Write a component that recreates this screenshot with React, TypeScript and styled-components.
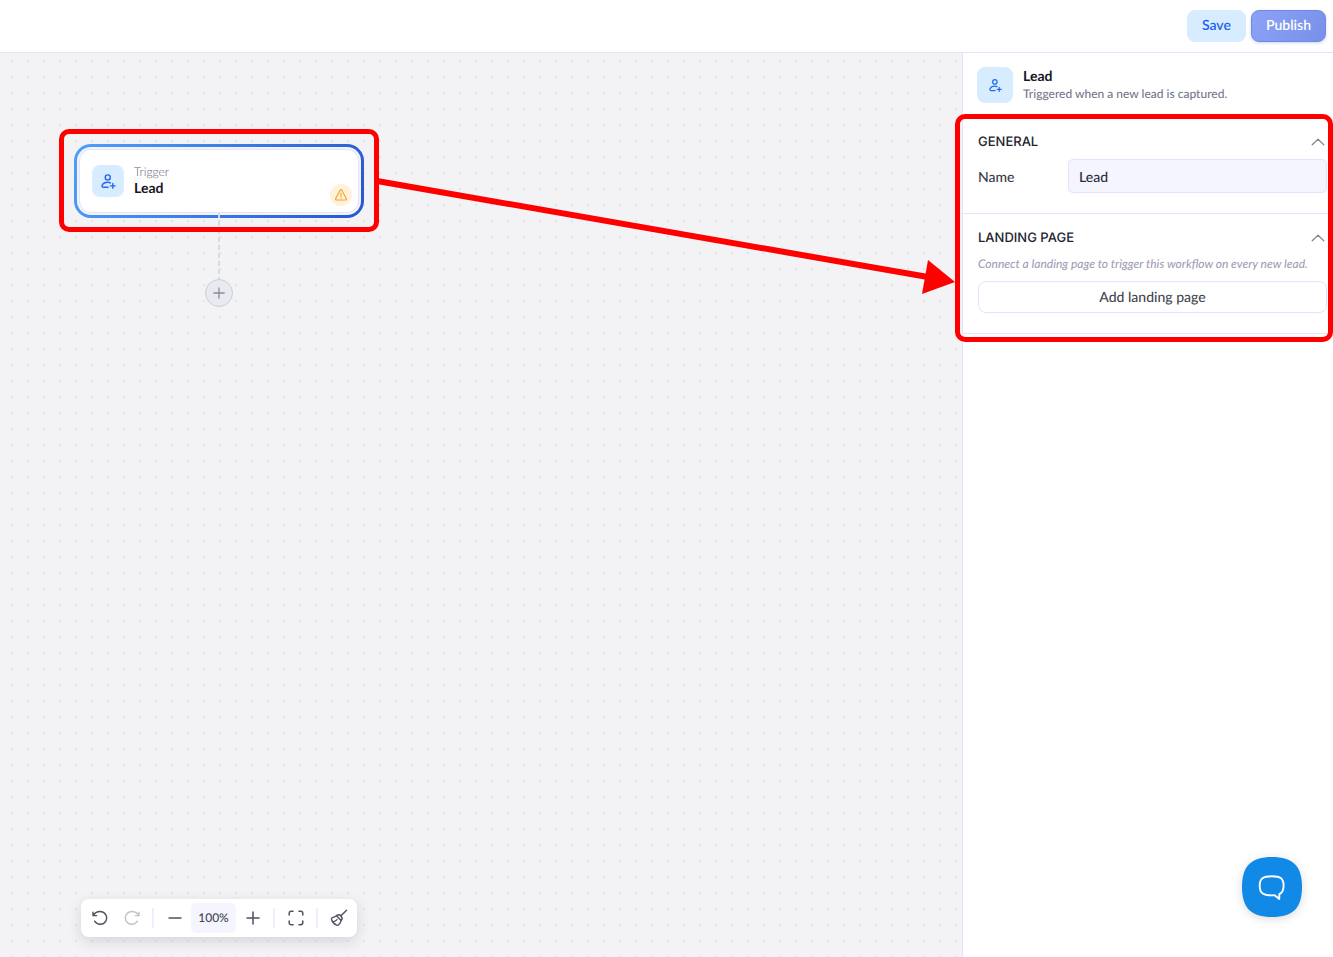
import React from "react";
import styled, { createGlobalStyle } from "styled-components";

const GlobalStyle = createGlobalStyle`
  *, *::before, *::after { box-sizing: border-box; }
  body {
    margin: 0;
    background: #fff;
    color: #23232f;
    font-family: Lato, "Open Sans", sans-serif;
    font-size: 14px;
    text-rendering: geometricPrecision;
  }
  button, input { font: inherit; color: inherit; text-rendering: inherit; }
  button { cursor: pointer; }
  h1, h2, p { margin: 0; }
`;

const line = "#e4e2fd";
const red = "#ff0000";

const Page = styled.div`
  position: relative;
  display: flex;
  flex-direction: column;
  min-height: 100vh;
`;

const TopBar = styled.header`
  display: flex;
  justify-content: flex-end;
  gap: 5px;
  padding: 10px 7px;
  border-bottom: 1px solid ${line};
`;

const ActionButton = styled.button<{ $primary?: boolean }>`
  height: 32px;
  padding: 0 14px 3px;
  border: 1px solid ${(p) => (p.$primary ? "#7389df" : "#d8ecff")};
  border-radius: 8px;
  background: ${(p) =>
    p.$primary ? "linear-gradient(120deg, #8ba2f6, #7890ea)" : "#d8ecff"};
  color: ${(p) => (p.$primary ? "#fff" : "#1a63f0")};
  box-shadow: ${(p) => (p.$primary ? "0 1px 3px rgba(90, 110, 220, 0.3)" : "none")};
  font-weight: 600;
`;

const Workspace = styled.div`
  display: flex;
  flex: 1;
`;

const Canvas = styled.main`
  position: relative;
  flex: 1;
  min-width: 0;
  background-color: #f3f3f5;
  background-image: conic-gradient(from 90deg at 14px 14px, #e4e4e7 25%, transparent 0);
  background-position: -3px -7px;
  background-size: 16px 16px;
`;

const NodeRing = styled.div`
  position: absolute;
  left: 74px;
  top: 91px;
  width: 290px;
  padding: 2px;
  border: 3px solid transparent;
  border-radius: 17px;
  background:
    linear-gradient(#f3f3f8, #f3f3f8) padding-box,
    linear-gradient(120deg, #4ea0fb, #2557d2) border-box;
`;

const NodeCard = styled.article`
  position: relative;
  display: flex;
  align-items: center;
  gap: 10px;
  height: 64px;
  padding: 0 12px;
  border: 1px solid ${line};
  border-radius: 12px;
  background: #fff;
`;

const IconTile = styled.span<{ $size: number }>`
  display: flex;
  flex: none;
  align-items: center;
  justify-content: center;
  width: ${(p) => p.$size}px;
  height: ${(p) => p.$size}px;
  border-radius: 8px;
  background: #d8ecff;
  color: #2468f2;
`;

const Kicker = styled.p`
  color: #5c5c74;
  font-size: 12px;
  font-weight: 300;
  line-height: 14px;
`;

const Title = styled.h1`
  color: #17171f;
  font-size: 14px;
  font-weight: 700;
  line-height: 18px;
`;

const Subtitle = styled.p`
  color: #77778c;
  font-size: 12px;
  font-weight: 500;
  line-height: 18px;
`;

const WarningBadge = styled.span`
  position: absolute;
  right: 6px;
  bottom: 6px;
  display: flex;
  align-items: center;
  justify-content: center;
  width: 22px;
  height: 22px;
  border-radius: 50%;
  background: #fff1da;
  color: #f5a432;
`;

const Connector = styled.svg`
  position: absolute;
  left: 218px;
  top: 160px;
`;

const AddStep = styled.button`
  position: absolute;
  left: 205px;
  top: 226px;
  display: flex;
  align-items: center;
  justify-content: center;
  width: 28px;
  height: 28px;
  padding: 0;
  border: 1px solid #c9ced9;
  border-radius: 50%;
  background: #e9e9f0;
  color: #8a8a9e;
`;

const Toolbar = styled.div`
  position: absolute;
  left: 81px;
  bottom: 20px;
  display: flex;
  align-items: center;
  height: 38px;
  padding: 0 4px;
  border-radius: 8px;
  background: #fff;
  box-shadow: 0 4px 14px rgba(30, 30, 60, 0.14);
`;

const ToolGroup = styled.div<{ $gap: number }>`
  display: flex;
  gap: ${(p) => p.$gap}px;
`;

const ToolButton = styled.button`
  display: flex;
  align-items: center;
  justify-content: center;
  width: 29px;
  height: 30px;
  padding: 0;
  border: 0;
  background: none;
  color: #50505f;

  &:disabled { color: #c3c3ca; }
`;

const ZoomLevel = styled.button`
  width: 45px;
  height: 30px;
  padding: 0 0 2px;
  border: 0;
  border-radius: 5px;
  background: #f5f5ff;
  color: #454554;
  font-size: 12px;
  font-weight: 500;
`;

const Divider = styled.span`
  width: 2px;
  height: 20px;
  margin: 0 6px;
  background: #eeeefd;
`;

const Panel = styled.aside`
  position: relative;
  flex: none;
  width: 371px;
  border-left: 1px solid ${line};
  background: #fff;
`;

const PanelHead = styled.header`
  display: flex;
  align-items: center;
  gap: 10px;
  padding: 14px 14px 15px;
`;

const Section = styled.section`
  padding: 14px 6px 20px 15px;
  border-bottom: 1px solid ${line};
`;

const SectionHead = styled.div`
  display: flex;
  align-items: center;
  justify-content: space-between;
  height: 20px;
  margin-bottom: 7px;
`;

const SectionTitle = styled.h2`
  color: #23232f;
  font-family: Inter, sans-serif;
  font-size: 13px;
  font-weight: 500;
  line-height: 20px;
`;

const Collapse = styled.button`
  display: flex;
  padding: 0 2px;
  border: 0;
  background: none;
  color: #85858f;
`;

const Field = styled.div`
  display: flex;
  align-items: center;
`;

const FieldLabel = styled.label`
  flex: none;
  width: 90px;
  color: #3c3c49;
  font-weight: 500;
`;

const TextInput = styled.input`
  flex: 1;
  min-width: 0;
  height: 34px;
  padding: 0 10px;
  border: 1px solid ${line};
  border-radius: 5px;
  background: #f5f5ff;
  color: #2b2b37;
  font-weight: 500;
`;

const Hint = styled.p`
  margin-bottom: 8px;
  color: #a0a0b6;
  font-size: 12px;
  font-style: italic;
  font-weight: 500;
  line-height: 18px;
`;

const WideButton = styled.button`
  width: 100%;
  height: 32px;
  padding: 0 0 2px;
  border: 1px solid ${line};
  border-radius: 8px;
  background: #fff;
  color: #454550;
  font-weight: 500;
`;

const ChatButton = styled.button`
  position: fixed;
  right: 31px;
  bottom: 40px;
  display: flex;
  padding: 0;
  border: 0;
  background: none;
  filter: drop-shadow(0 2px 5px rgba(0, 0, 0, 0.14));
`;

const Highlight = styled.div`
  position: absolute;
  border: 5px solid ${red};
  border-radius: 10px;
  pointer-events: none;
`;

const NodeHighlight = styled(Highlight)`
  left: 59px;
  top: 76px;
  width: 320px;
  height: 103px;
`;

const PanelHighlight = styled(Highlight)`
  left: -8px;
  right: 0;
  top: 61px;
  height: 228px;
`;

const Arrow = styled.svg`
  position: absolute;
  left: 375px;
  top: 170px;
  pointer-events: none;
`;

const stroke = {
  fill: "none",
  stroke: "currentColor",
  strokeLinecap: "round" as const,
  strokeLinejoin: "round" as const,
};

const LeadIcon = ({ size }: { size: number }) => (
  <svg width={size} height={size} viewBox="0 0 16 16" {...stroke} strokeWidth="1.5">
    <circle cx="7.2" cy="3.6" r="2.7" />
    <path d="M7.6 14.2H2.6C1.2 14.2 .8 13.2 1.3 12C2.2 9.7 4.4 8.8 7 8.8C8.2 8.8 9.3 9 10 9.5M12.6 10.2V15.2M10.1 12.7H15.1" />
  </svg>
);

const WarningIcon = () => (
  <svg width="14" height="14" viewBox="0 0 14 14" {...stroke} strokeWidth="1.2">
    <path d="M6.2 2.2Q7 1 7.8 2.2L12.3 10.5Q12.8 12 11.4 12H2.6Q1.2 12 1.7 10.5ZM7 5V8.2M7 9.8V10.1" />
  </svg>
);

const PlusIcon = ({ size }: { size: number }) => (
  <svg width={size} height={size} viewBox="0 0 14 14" {...stroke} strokeWidth="1.5">
    <path d="M7 1V13M1 7H13" />
  </svg>
);

const MinusIcon = () => (
  <svg width="14" height="14" viewBox="0 0 14 14" {...stroke} strokeWidth="1.4">
    <path d="M1 7H13" />
  </svg>
);

const UndoIcon = ({ flipped }: { flipped?: boolean }) => (
  <svg width="16" height="16" viewBox="0 0 16 16" {...stroke} strokeWidth="1.4">
    <g transform={flipped ? "matrix(-1 0 0 1 16 0)" : undefined}>
      <path d="M1 2.2V5.6H4.6M1.3 5.3C2.8 3 5.3 1.5 8.2 1.5A6.4 6.4 0 1 1 2.7 11.2" />
    </g>
  </svg>
);

const FitIcon = () => (
  <svg width="16" height="16" viewBox="0 0 16 16" {...stroke} strokeWidth="1.5">
    <path d="M1.2 5V3.4Q1.2 1.2 3.4 1.2H5M11 1.2H12.6Q14.8 1.2 14.8 3.4V5M14.8 11V12.6Q14.8 14.8 12.6 14.8H11M5 14.8H3.4Q1.2 14.8 1.2 12.6V11" />
  </svg>
);

const BroomIcon = () => (
  <svg width="18" height="18" viewBox="0 0 18 18" {...stroke} strokeWidth="1.4">
    <path d="M16.6 1.2L10.7 7.1M6.4 6.8Q8.8 4.6 11 6.9Q13.2 9.2 11.2 11.5M6.4 6.8L11.2 11.5M6.4 6.8Q4.6 8.2 2.4 8.6Q1.2 9 1.5 10.4Q2.6 14.4 6.6 16.2Q8 16.7 9 15.4Q10.6 13.6 11.2 11.5M3.4 12.6Q5.4 12.4 7 10.6" />
  </svg>
);

const ChevronUp = () => (
  <svg width="14" height="8" viewBox="0 0 14 8" {...stroke} strokeWidth="1.2">
    <path d="M1.2 6.8L7 1.2L12.8 6.8" />
  </svg>
);

const ChatIcon = () => (
  <svg width="60" height="60" viewBox="0 0 60 60" fill="none">
    <path
      d="M30 0C51 0 60 9 60 30C60 51 51 60 30 60C9 60 0 51 0 30C0 9 9 0 30 0Z"
      fill="#1189e7"
    />
    <path
      d="M30 19.2C38.5 19.2 41.6 21.5 41.6 28.5C41.6 33 40.4 35.8 37.3 37.2L37.3 42L32.6 38.3C31.8 38.4 30.8 38.4 29.8 38.4C21 38.4 17.7 36 17.7 28.7C17.7 21.5 21 19.2 30 19.2Z"
      stroke="#fff"
      strokeWidth="1.9"
      strokeLinejoin="round"
    />
  </svg>
);

const PanelSection = ({ title, children }: { title: string; children: React.ReactNode }) => (
  <Section>
    <SectionHead>
      <SectionTitle>{title}</SectionTitle>
      <Collapse type="button" aria-label="Collapse section">
        <ChevronUp />
      </Collapse>
    </SectionHead>
    {children}
  </Section>
);

export default function App() {
  return (
    <Page>
      <GlobalStyle />
      <TopBar>
        <ActionButton type="button">Save</ActionButton>
        <ActionButton type="button" $primary>
          Publish
        </ActionButton>
      </TopBar>
      <Workspace>
        <Canvas>
          <NodeRing>
            <NodeCard>
              <IconTile $size={32}>
                <LeadIcon size={15} />
              </IconTile>
              <div>
                <Kicker>Trigger</Kicker>
                <Title as="h2">Lead</Title>
              </div>
              <WarningBadge>
                <WarningIcon />
              </WarningBadge>
            </NodeCard>
          </NodeRing>
          <Connector width="2" height="66" viewBox="0 0 2 66">
            <path d="M1 0V66" stroke="#d6dbe5" strokeWidth="2" strokeDasharray="5 3" />
          </Connector>
          <AddStep type="button" aria-label="Add step">
            <PlusIcon size={12} />
          </AddStep>
          <Toolbar>
            <ToolGroup $gap={3}>
              <ToolButton type="button" aria-label="Undo">
                <UndoIcon />
              </ToolButton>
              <ToolButton type="button" aria-label="Redo" disabled>
                <UndoIcon flipped />
              </ToolButton>
            </ToolGroup>
            <Divider />
            <ToolGroup $gap={2}>
              <ToolButton type="button" aria-label="Zoom out">
                <MinusIcon />
              </ToolButton>
              <ZoomLevel type="button">100%</ZoomLevel>
              <ToolButton type="button" aria-label="Zoom in">
                <PlusIcon size={14} />
              </ToolButton>
            </ToolGroup>
            <Divider />
            <ToolButton type="button" aria-label="Fit view">
              <FitIcon />
            </ToolButton>
            <Divider />
            <ToolButton type="button" aria-label="Tidy up">
              <BroomIcon />
            </ToolButton>
          </Toolbar>
          <NodeHighlight />
        </Canvas>
        <Panel>
          <PanelHead>
            <IconTile $size={36}>
              <LeadIcon size={13} />
            </IconTile>
            <div>
              <Title>Lead</Title>
              <Subtitle>Triggered when a new lead is captured.</Subtitle>
            </div>
          </PanelHead>
          <PanelSection title="GENERAL">
            <Field>
              <FieldLabel htmlFor="trigger-name">Name</FieldLabel>
              <TextInput id="trigger-name" type="text" defaultValue="Lead" />
            </Field>
          </PanelSection>
          <PanelSection title="LANDING PAGE">
            <Hint>Connect a landing page to trigger this workflow on every new lead.</Hint>
            <WideButton type="button">Add landing page</WideButton>
          </PanelSection>
          <PanelHighlight />
        </Panel>
      </Workspace>
      <Arrow width="582" height="128" viewBox="0 0 582 128">
        <path d="M2 11L553 107" stroke={red} strokeWidth="6" />
        <path d="M553 90L580 112L547 124Z" fill={red} />
      </Arrow>
      <ChatButton type="button" aria-label="Open chat">
        <ChatIcon />
      </ChatButton>
    </Page>
  );
}
